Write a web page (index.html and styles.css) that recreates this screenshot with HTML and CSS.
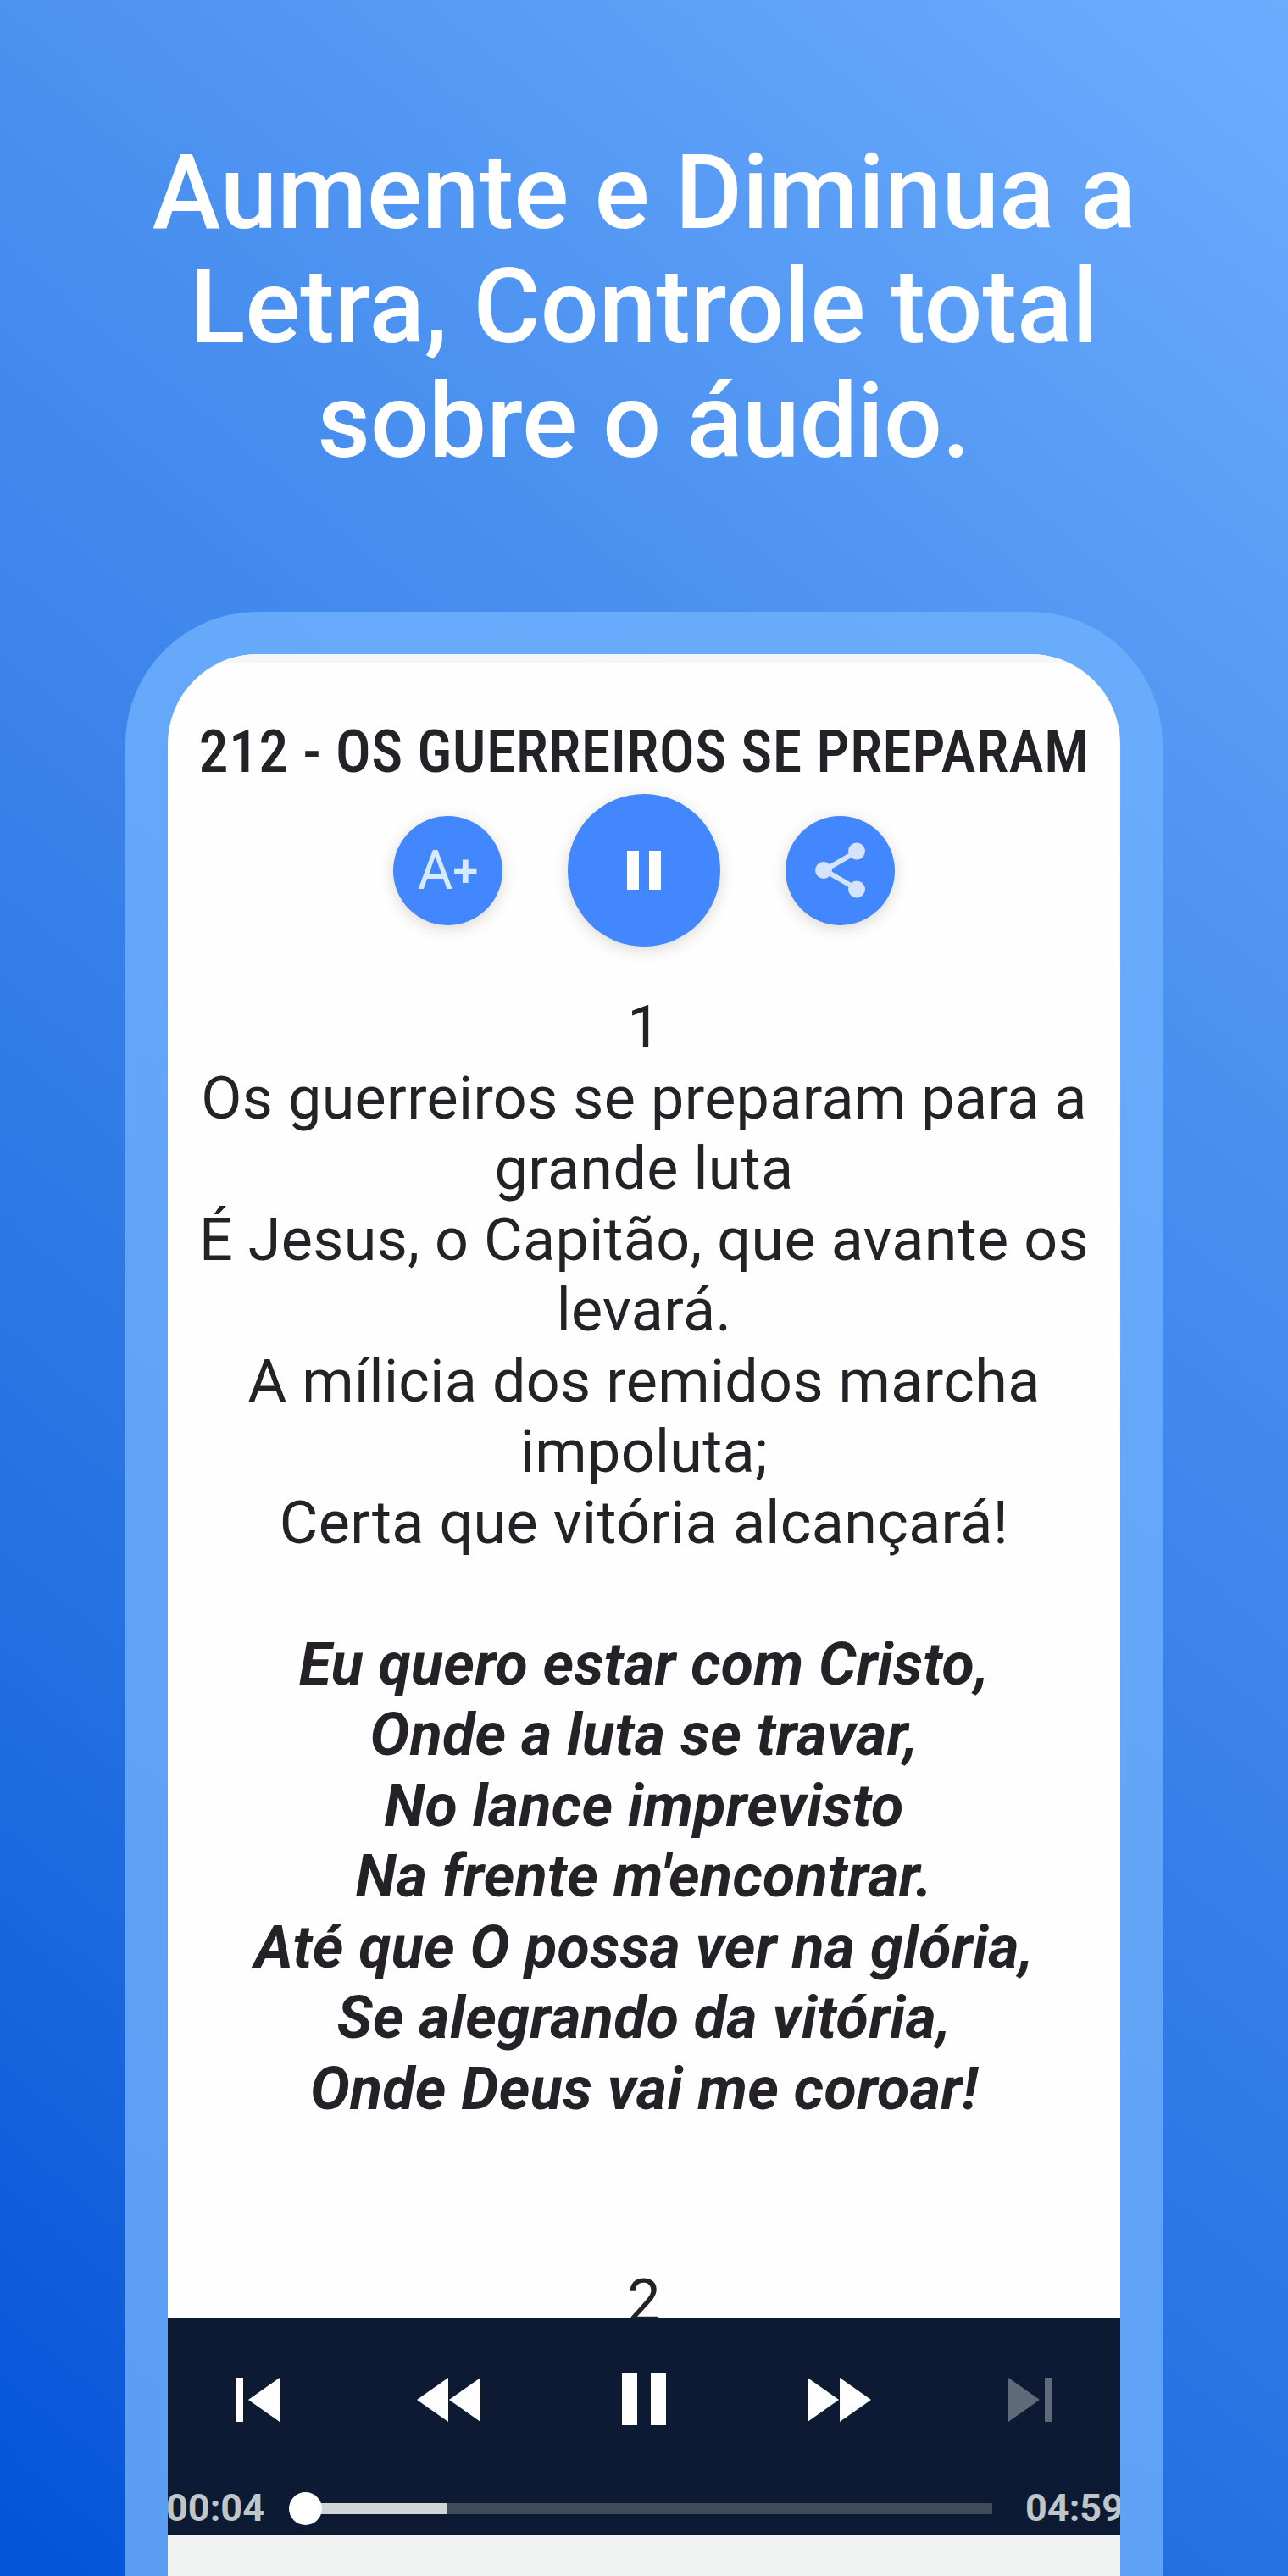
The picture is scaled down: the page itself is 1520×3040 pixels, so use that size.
FILE: index.html
```html
<!DOCTYPE html>
<html lang="pt-BR">
<head>
    <meta charset="UTF-8">
    <meta name="viewport" content="width=device-width, initial-scale=1.0">
    <title>Harpa - Controle de áudio</title>
    <link rel="stylesheet" href="styles.css">
</head>
<body>
    <div class="promo">
        <h1 class="headline">Aumente e Diminua a<br>Letra, Controle total<br>sobre o áudio.</h1>

        <div class="phone">
            <div class="screen">
                <div class="hymn">
                    <h2 class="hymn-title">212 - OS GUERREIROS SE PREPARAM</h2>

                    <div class="actions">
                        <button class="round-btn font-btn">A<span class="plus">+</span></button>
                        <button class="round-btn play-btn">
                            <svg width="40" height="46" viewBox="0 0 40 46"><path d="M0 0h14v46H0zM26 0h14v46H26z" fill="#fff"/></svg>
                        </button>
                        <button class="round-btn">
                            <svg width="60" height="66" viewBox="0 0 60 66" fill="#d5e4fc">
                                <path d="M49 11L11 33l38 22" fill="none" stroke="#d5e4fc" stroke-width="6"/>
                                <circle cx="49" cy="10.5" r="10"/>
                                <circle cx="10" cy="33" r="10"/>
                                <circle cx="49" cy="55.5" r="10"/>
                            </svg>
                        </button>
                    </div>

                    <div class="lyrics">
                        <p>1<br>Os guerreiros se preparam para a<br>grande luta<br>É Jesus, o Capitão, que avante os<br>levará.<br>A mílicia dos remidos marcha<br>impoluta;<br>Certa que vitória alcançará!</p>
                        <p class="chorus">Eu quero estar com Cristo,<br>Onde a luta se travar,<br>No lance imprevisto<br>Na frente m'encontrar.<br>Até que O possa ver na glória,<br>Se alegrando da vitória,<br>Onde Deus vai me coroar!</p>
                        <p class="next-verse">2</p>
                    </div>
                </div>

                <div class="player">
                    <div class="controls">
                        <svg width="52" height="52" viewBox="0 0 52 52"><path d="M0 0h9v52H0zM52 0v52L15 26z"/></svg>
                        <svg width="75" height="52" viewBox="0 0 75 52"><path d="M37 0v52L0 26zM75 0v52L38 26z"/></svg>
                        <svg class="pause" width="52" height="61" viewBox="0 0 52 61"><path d="M0 0h18v61H0zM34 0h18v61H34z"/></svg>
                        <svg width="75" height="52" viewBox="0 0 75 52"><path d="M0 0v52l37-26zM38 0v52l37-26z"/></svg>
                        <svg class="disabled" width="52" height="52" viewBox="0 0 52 52"><path d="M43 0h9v52h-9zM0 0v52l37-26z"/></svg>
                    </div>
                    <div class="seek">
                        <span class="time">00:04</span>
                        <div class="track">
                            <div class="buffered"></div>
                            <div class="knob"></div>
                        </div>
                        <span class="time">04:59</span>
                    </div>
                </div>
                <div class="bottom-bar"></div>
            </div>
        </div>
    </div>
</body>
</html>
```
FILE: styles.css
```css
* {
    box-sizing: border-box;
}

body {
    margin: 0;
    font-family: Roboto, "Liberation Sans", sans-serif;
}

.promo {
    height: 3040px;
    overflow: hidden;
    background: linear-gradient(220deg, #6cadfe 0%, #4b91f0 30%, #2772e3 70%, #0453d8 100%);
}

.headline {
    margin: 0;
    padding-top: 160px;
    height: 722px;
    font-size: 121.5px;
    font-weight: 500;
    line-height: 135px;
    text-align: center;
    color: #fff;
}

.phone {
    width: 1224px;
    height: 2318px;
    margin: 0 auto;
    padding: 50px 50px 0;
    border-radius: 156px 156px 0 0;
    background: linear-gradient(215deg, #6aacfc, #62a5f7 50%, #5a9df3);
}

.screen {
    display: flex;
    flex-direction: column;
    height: 100%;
    border-radius: 106px 106px 0 0;
    overflow: hidden;
    background: #fefefe;
}

.hymn {
    height: 1964px;
    border-top: 11px solid #f6f5f7;
    overflow: hidden;
    text-align: center;
    color: #242227;
}

.hymn-title {
    margin: 63px 0 0;
    font-family: "Roboto Condensed", Roboto, sans-serif;
    font-size: 70px;
    font-weight: 500;
    line-height: 82px;
    letter-spacing: 0.4px;
    white-space: nowrap;
}

.actions {
    display: flex;
    justify-content: center;
    align-items: center;
    gap: 77px;
    height: 180px;
    margin-top: 9px;
}

.round-btn {
    display: flex;
    justify-content: center;
    align-items: center;
    width: 129px;
    height: 129px;
    padding: 0;
    border: none;
    border-radius: 50%;
    background: #4287fd;
    box-shadow: 0 4px 18px rgba(60, 50, 20, 0.18);
    color: #d6ebff;
    font-family: inherit;
    font-size: 64px;
    font-weight: 450;
}

.plus {
    font-size: 54px;
    font-weight: 600;
}

.play-btn {
    width: 180px;
    height: 180px;
}

.lyrics {
    margin-top: 54px;
    font-size: 70px;
    line-height: 83.5px;
    letter-spacing: 0.36px;
    white-space: nowrap;
}

.lyrics p {
    margin: 0 0 83.5px;
}

.lyrics .chorus {
    margin-bottom: 167px;
    font-weight: 700;
    font-style: italic;
    letter-spacing: 0.28px;
}

.player {
    height: 256px;
    background: #0d1a33;
}

.controls {
    display: flex;
    justify-content: space-between;
    align-items: center;
    height: 191px;
    padding: 0 80px;
    fill: #fff;
}

.controls .pause {
    margin: 0 5px;
}

.controls .disabled {
    fill: #5f6a78;
}

.seek {
    display: flex;
    align-items: center;
    height: 66px;
    margin: 0 -2px;
}

.time {
    width: 114px;
    margin-top: -2px;
    font-size: 45px;
    font-weight: 700;
    color: #c0c6c8;
}

.track {
    position: relative;
    flex: 1;
    height: 13px;
    margin: 0 39px 0 50px;
    background: #414c5b;
}

.buffered {
    width: 167px;
    height: 100%;
    background: #cfd6d7;
}

.knob {
    position: absolute;
    top: -13px;
    left: -19px;
    width: 39px;
    height: 39px;
    border-radius: 50%;
    background: #fff;
}

.bottom-bar {
    flex: 1;
    background: #f1f2f2;
}
```
